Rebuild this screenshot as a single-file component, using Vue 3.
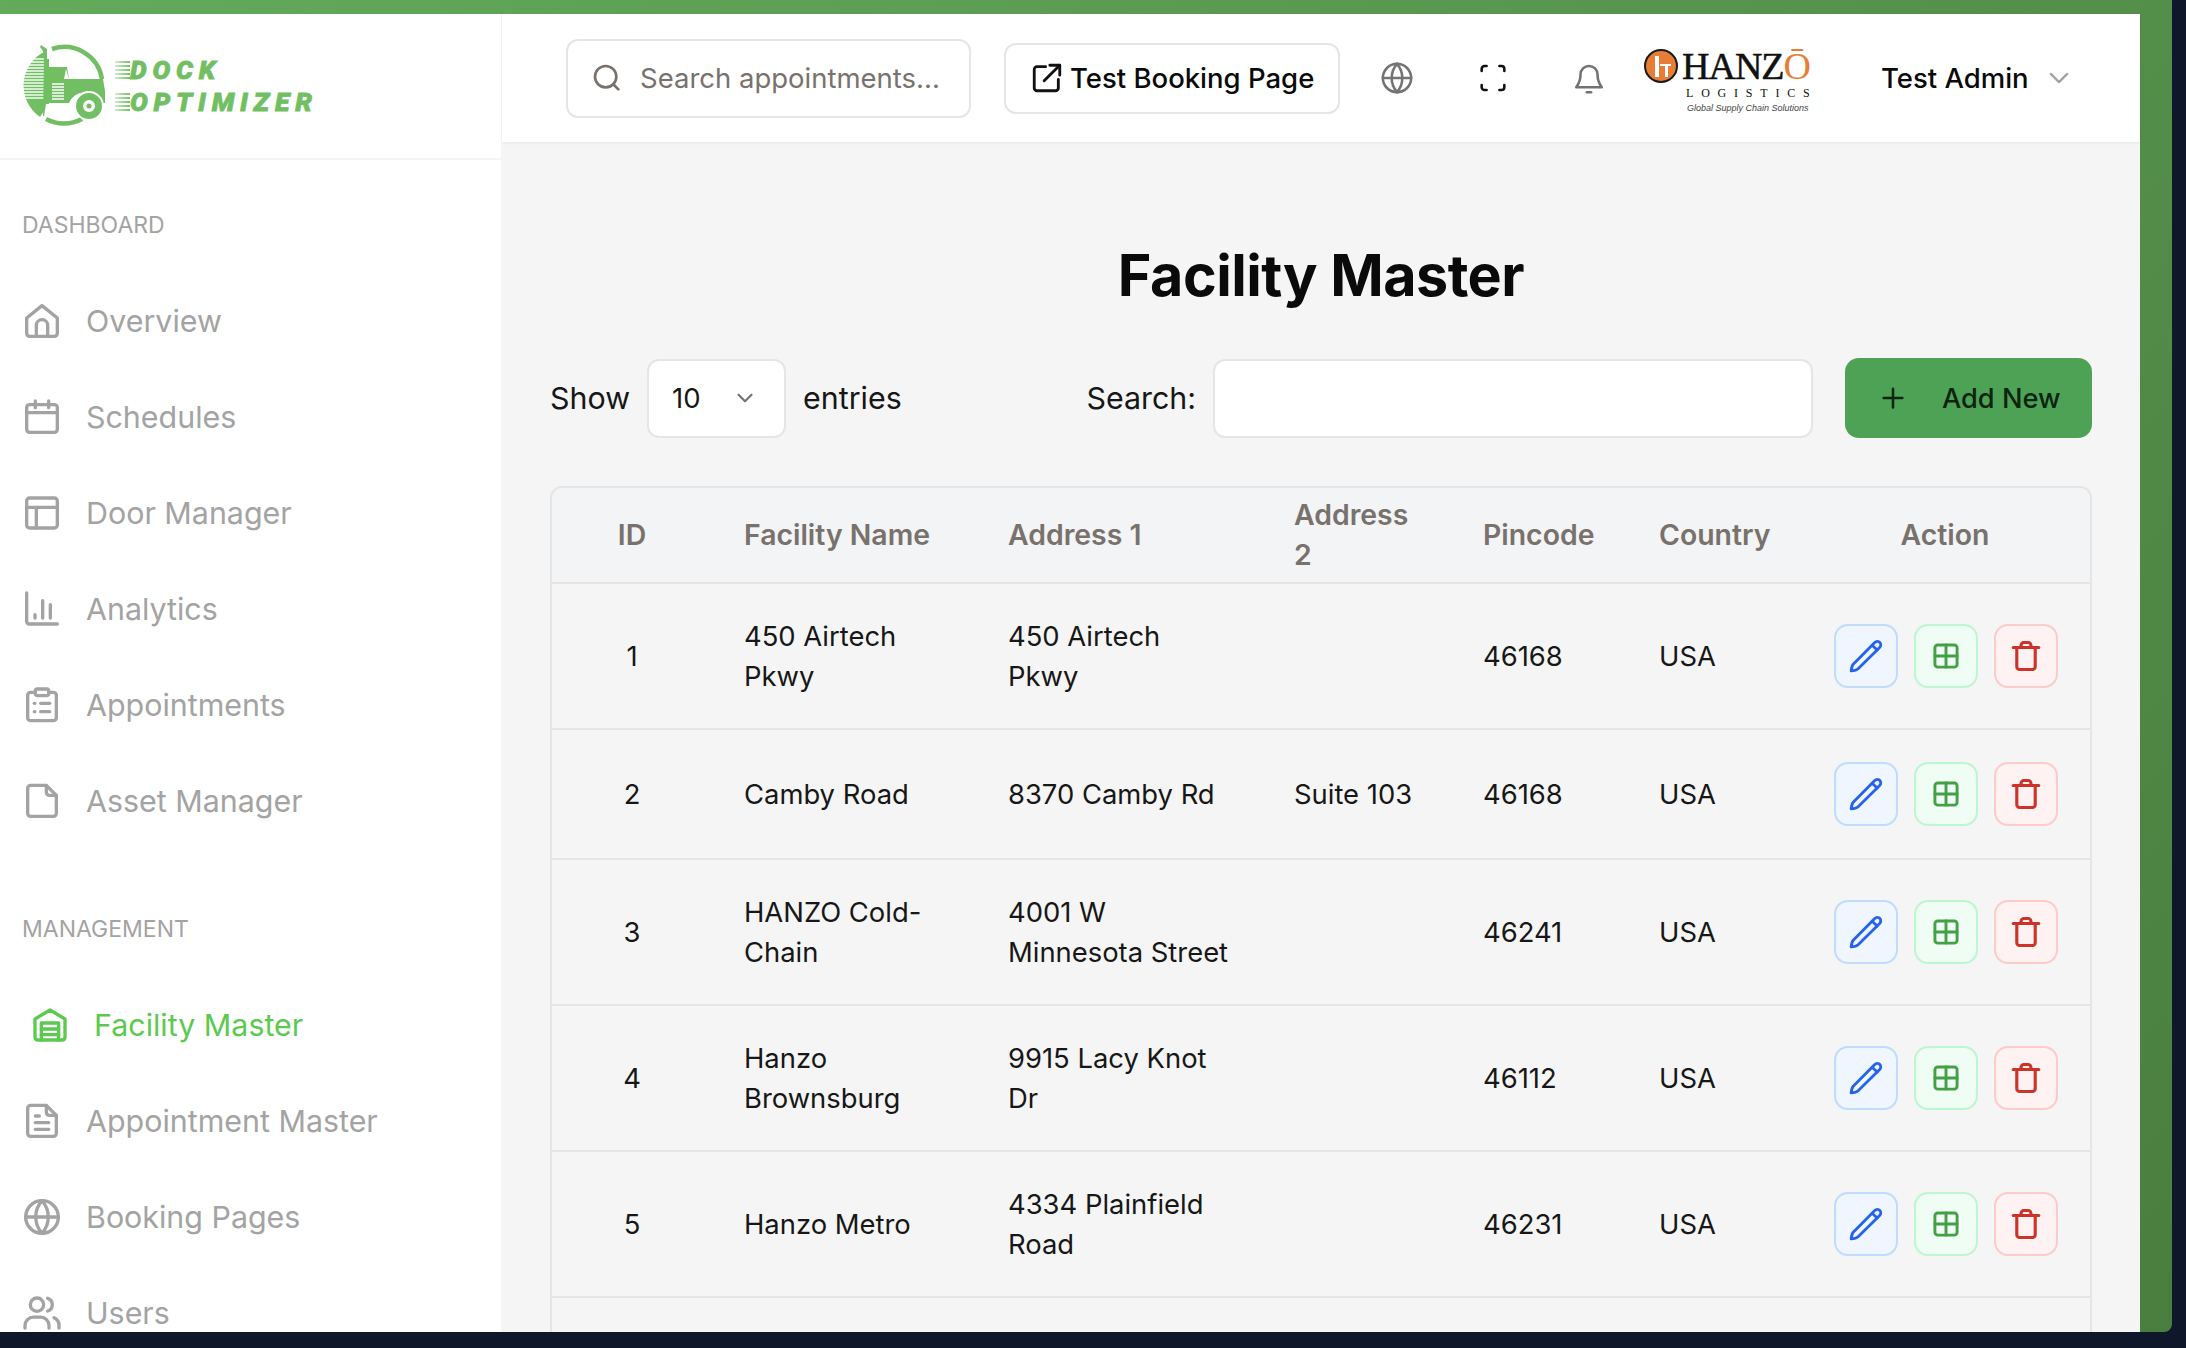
<script setup>
const dashboardItems = [
  { label: 'Overview', paths: ['M2.8 10.2 12 2.8l9.2 7.4v9.2a1.8 1.8 0 0 1-1.8 1.8H4.6a1.8 1.8 0 0 1-1.8-1.8z', 'M8.6 21v-6.4a3.4 3.4 0 0 1 6.8 0V21'] },
  { label: 'Schedules', paths: ['M4.6 4.6h14.8a1.8 1.8 0 0 1 1.8 1.8v13a1.8 1.8 0 0 1-1.8 1.8H4.6a1.8 1.8 0 0 1-1.8-1.8v-13a1.8 1.8 0 0 1 1.8-1.8z', 'M2.8 9.4h18.4', 'M8 2.4v4', 'M16 2.4v4'] },
  { label: 'Door Manager', paths: ['M4.6 3h14.8a1.8 1.8 0 0 1 1.8 1.8v14.4a1.8 1.8 0 0 1-1.8 1.8H4.6a1.8 1.8 0 0 1-1.8-1.8V4.8A1.8 1.8 0 0 1 4.6 3z', 'M2.8 8.6h18.4', 'M8.6 8.6V21'] },
  { label: 'Analytics', paths: ['M2.8 2.4v17a1.6 1.6 0 0 0 1.6 1.6h16.8', 'M7.8 17.4v-2', 'M12.4 17.4V7', 'M17 17.4V9.4'] },
  { label: 'Appointments', paths: ['M8 4.4H5.2a1.8 1.8 0 0 0-1.8 1.8v13.4a1.8 1.8 0 0 0 1.8 1.8h13.6a1.8 1.8 0 0 0 1.8-1.8V6.2a1.8 1.8 0 0 0-1.8-1.8H16', 'M9.2 2.4h5.6A1.2 1.2 0 0 1 16 3.6v1.6a1.2 1.2 0 0 1-1.2 1.2H9.2A1.2 1.2 0 0 1 8 5.2V3.6a1.2 1.2 0 0 1 1.2-1.2z', 'M7.4 11h.3', 'M11.2 11h5.4', 'M7.4 16h.3', 'M11.2 16h5.4'] },
  { label: 'Asset Manager', paths: ['M5.2 2.6h9.4l6 6v10.8a1.8 1.8 0 0 1-1.8 1.8H5.2a1.8 1.8 0 0 1-1.8-1.8V4.4a1.8 1.8 0 0 1 1.8-1.8z', 'M14.6 2.6v4.2a1.8 1.8 0 0 0 1.8 1.8h4.2'] },
]

const managementItems = [
  { label: 'Appointment Master', paths: ['M5.2 2.6h9.4l6 6v10.8a1.8 1.8 0 0 1-1.8 1.8H5.2a1.8 1.8 0 0 1-1.8-1.8V4.4a1.8 1.8 0 0 1 1.8-1.8z', 'M14.6 2.6v4.2a1.8 1.8 0 0 0 1.8 1.8h4.2', 'M8 9h2.4', 'M8 13h8', 'M8 17h8'] },
  { label: 'Booking Pages', paths: ['M12 2.2a9.8 9.8 0 1 0 0 19.6 9.8 9.8 0 0 0 0-19.6z', 'M2.2 12h19.6', 'M12 2.2c-5 5.6-5 14 0 19.6', 'M12 2.2c5 5.6 5 14 0 19.6'] },
  { label: 'Users', paths: ['M9 3a4 4 0 1 0 0 8 4 4 0 0 0 0-8z', 'M1.8 21v-1.5a5 5 0 0 1 5-5h4.4a5 5 0 0 1 5 5V21', 'M15.4 3.2a4 4 0 0 1 0 7.6', 'M19.2 14.8a5 5 0 0 1 3 4.7V21'] },
]

const facilities = [
  { id: 1, name: '450 Airtech Pkwy', address1: '450 Airtech Pkwy', address2: '', pincode: '46168', country: 'USA' },
  { id: 2, name: 'Camby Road', address1: '8370 Camby Rd', address2: 'Suite 103', pincode: '46168', country: 'USA' },
  { id: 3, name: 'HANZO Cold-Chain', address1: '4001 W Minnesota Street', address2: '', pincode: '46241', country: 'USA' },
  { id: 4, name: 'Hanzo Brownsburg', address1: '9915 Lacy Knot Dr', address2: '', pincode: '46112', country: 'USA' },
  { id: 5, name: 'Hanzo Metro', address1: '4334 Plainfield Road', address2: '', pincode: '46231', country: 'USA' },
]

// stripes over the left half of the truck badge
const truckStripes = Array.from({ length: 14 }, (_, i) => 60 + i * 3)
const cabStripes = Array.from({ length: 6 }, (_, i) => 85 + i * 3)
</script>

<template>
  <div class="frame">
    <aside class="sidebar">
      <div class="brand">
        <svg class="truck" viewBox="20 44 90 86" width="90" height="86">
          <path d="M52 50a38 38 0 0 1 50 30" fill="none" stroke="#72bf63" stroke-width="4.5" />
          <path d="M82 120a38 38 0 0 1-36 0" fill="none" stroke="#72bf63" stroke-width="4.5" />
          <path d="M44 53a38 38 0 0 0-4 65l4-6z" fill="#72bf63" />
          <path v-for="y in truckStripes" :key="y" :d="`M22 ${y}h22`" stroke="#fff" stroke-width="1.4" />
          <path d="M44 60h3V50l-6-4-1 2 3 4zM44 60h5v45h-3l-2 12h-1z" fill="#72bf63" />
          <path d="M49 68h18l2 12h34l2 12v12h-6a16 16 0 0 0-30 0H49z" fill="#72bf63" />
          <path v-for="y in cabStripes" :key="y" :d="`M52 ${y}h12`" stroke="#fff" stroke-width="1.5" />
          <path d="M66 70l3 10h-5z" fill="#fff" />
          <circle cx="89" cy="107" r="14" fill="#72bf63" stroke="#fff" stroke-width="2" />
          <circle cx="89" cy="107" r="6" fill="#fff" />
          <circle cx="89" cy="107" r="2.5" fill="#72bf63" />
        </svg>
        <div class="brand-name">
          <span>DOCK</span>
          <span>OPTIMIZER</span>
        </div>
      </div>

      <nav class="nav">
        <div class="nav-title">DASHBOARD</div>
        <a v-for="item in dashboardItems" :key="item.label" class="nav-item">
          <svg class="nav-icon" viewBox="0 0 24 24">
            <path v-for="d in item.paths" :key="d" :d="d" />
          </svg>
          {{ item.label }}
        </a>

        <div class="nav-title second">MANAGEMENT</div>
        <a class="nav-item active">
          <svg class="nav-icon" viewBox="0 0 24 24">
            <path d="M3 8.4 12 3l9 5.4v11a1.6 1.6 0 0 1-1.6 1.6H4.6A1.6 1.6 0 0 1 3 19.4z" />
            <path d="M6.8 21V10.8h10.4V21" />
            <path d="M6.8 14.4h10.4" />
            <path d="M6.8 17.8h10.4" />
          </svg>
          Facility Master
        </a>
        <a v-for="item in managementItems" :key="item.label" class="nav-item">
          <svg class="nav-icon" viewBox="0 0 24 24">
            <path v-for="d in item.paths" :key="d" :d="d" />
          </svg>
          {{ item.label }}
        </a>
      </nav>
    </aside>

    <div class="content">
      <header class="topbar">
        <label class="top-search">
          <svg class="search-icon" viewBox="0 0 24 24">
            <circle cx="11" cy="11" r="8" />
            <path d="m20.5 20.5-3.8-3.8" />
          </svg>
          <span>Search appointments...</span>
        </label>

        <button class="test-link">
          <svg viewBox="0 0 24 24" width="34" height="34">
            <path d="M11 4H5a2 2 0 0 0-2 2v13a2 2 0 0 0 2 2h13a2 2 0 0 0 2-2v-6" />
            <path d="M10 14 21 3" />
            <path d="M14 3h7v7" />
          </svg>
          Test Booking Page
        </button>

        <div class="top-icons">
          <span class="top-icon">
            <svg class="grey" viewBox="0 0 24 24" width="34" height="34">
              <circle cx="12" cy="12" r="10" />
              <path d="M2 12h20" />
              <path d="M12 2c-5 5.8-5 14.2 0 20" />
              <path d="M12 2c5 5.8 5 14.2 0 20" />
            </svg>
          </span>
          <span class="top-icon">
            <svg viewBox="0 0 24 24" width="34" height="34">
              <path d="M7.5 3.5H6a2 2 0 0 0-2 2V7" />
              <path d="M16.5 3.5H18a2 2 0 0 1 2 2V7" />
              <path d="M7.5 20.5H6a2 2 0 0 1-2-2V17" />
              <path d="M16.5 20.5H18a2 2 0 0 0 2-2V17" />
            </svg>
          </span>
          <span class="top-icon">
            <svg class="grey" viewBox="0 0 24 24" width="34" height="34">
              <path d="M6 9.5a6 6 0 0 1 12 0c0 5 1.6 7 3 9H3c1.4-2 3-4 3-9z" />
              <path d="M10.5 22h3" />
            </svg>
          </span>
        </div>

        <div class="hanzo">
          <div class="hanzo-mark">
            <span class="hanzo-circle"><i></i><b></b><u></u></span>
            <span class="hanzo-word">HANZ<em>Ō</em></span>
          </div>
          <div class="hanzo-sub">LOGISTICS</div>
          <div class="hanzo-tag">Global Supply Chain Solutions</div>
        </div>

        <div class="user">
          Test Admin
          <svg viewBox="0 0 24 24" width="28" height="28">
            <path d="m5 8.5 7 7 7-7" />
          </svg>
        </div>
      </header>

      <main class="page">
        <h1>Facility Master</h1>

        <div class="filters">
          <div class="length">
            <span>Show</span>
            <div class="select">
              10
              <svg viewBox="0 0 24 24" width="26" height="26">
                <path d="m6 9 6 6 6-6" />
              </svg>
            </div>
            <span>entries</span>
          </div>
          <div class="table-search">
            <span>Search:</span>
            <input type="text" />
          </div>
          <button class="add-btn">
            <svg viewBox="0 0 24 24" width="30" height="30">
              <path d="M12 4.5v15" />
              <path d="M4.5 12h15" />
            </svg>
            Add New
          </button>
        </div>

        <div class="table-wrap">
          <table>
            <colgroup>
              <col style="width: 160px" />
              <col style="width: 264px" />
              <col style="width: 286px" />
              <col style="width: 189px" />
              <col style="width: 176px" />
              <col style="width: 173px" />
              <col />
            </colgroup>
            <thead>
              <tr>
                <th class="center">ID</th>
                <th>Facility Name</th>
                <th>Address 1</th>
                <th>Address 2</th>
                <th>Pincode</th>
                <th>Country</th>
                <th class="center">Action</th>
              </tr>
            </thead>
            <tbody>
              <tr v-for="row in facilities" :key="row.id">
                <td class="center">{{ row.id }}</td>
                <td>{{ row.name }}</td>
                <td>{{ row.address1 }}</td>
                <td>{{ row.address2 }}</td>
                <td>{{ row.pincode }}</td>
                <td>{{ row.country }}</td>
                <td>
                  <div class="actions">
                    <button class="act edit">
                      <svg viewBox="0 0 24 24" width="42" height="42">
                        <path d="M3.5 20.5c.2-1.8.5-3 1.2-3.8L17 4.3a2 2 0 0 1 2.9 0l-.1-.1a2 2 0 0 1 0 2.9L7.5 19.3c-.8.7-2.200 1.100-4 1.200z" />
                        <path d="m15.5 5.8 2.9 2.8" />
                      </svg>
                    </button>
                    <button class="act grid">
                      <svg viewBox="0 0 24 24" width="28" height="28">
                        <path d="M5 2.5h14A2.5 2.5 0 0 1 21.5 5v14a2.5 2.5 0 0 1-2.5 2.5H5A2.5 2.5 0 0 1 2.5 19V5A2.5 2.5 0 0 1 5 2.5z" />
                        <path d="M12 2.5v19" />
                        <path d="M2.5 12h19" />
                      </svg>
                    </button>
                    <button class="act trash">
                      <svg viewBox="0 0 24 24" width="34" height="34">
                        <path d="M3 6h18" />
                        <path d="M5.5 6v13.5a2 2 0 0 0 2 2h9a2 2 0 0 0 2-2V6" />
                        <path d="M8.5 6V4.5a2 2 0 0 1 2-2h3a2 2 0 0 1 2 2V6" />
                      </svg>
                    </button>
                  </div>
                </td>
              </tr>
              <tr class="spacer"><td colspan="7"></td></tr>
            </tbody>
          </table>
        </div>
      </main>
    </div>
  </div>
</template>

<style>
html,
body {
  margin: 0;
  height: 1348px;
  overflow: hidden;
  background: #0f172a;
}
</style>

<style scoped>
.frame {
  box-sizing: border-box;
  display: flex;
  width: 2172px;
  height: 1332px;
  padding: 14px 32px 0 0;
  overflow: hidden;
  border-radius: 0 0 8px 0;
  background: linear-gradient(135deg, #63aa5b 0%, #4a7e3f 100%);
  font-family: Inter, 'Noto Sans', sans-serif;
}

.sidebar {
  flex: 0 0 502px;
  box-sizing: border-box;
  height: 100%;
  overflow: hidden;
  background: #fff;
  border-right: 1px solid #f5f5f5;
}

.brand {
  display: flex;
  align-items: center;
  gap: 20px;
  box-sizing: border-box;
  height: 146px;
  padding-left: 20px;
  border-bottom: 2px solid #f5f5f5;
}

.truck {
  flex: none;
}

.brand-name {
  display: flex;
  flex-direction: column;
  align-items: flex-start;
  color: #72bf63;
  font-family: Roboto, 'Liberation Sans', sans-serif;
  font-size: 26.5px;
  font-style: italic;
  font-weight: 900;
  line-height: 32px;
  letter-spacing: 5.8px;
  -webkit-text-stroke: 0.8px #72bf63;
}

.brand-name span {
  position: relative;
}

.brand-name span::before {
  content: '';
  position: absolute;
  left: -15px;
  top: 7px;
  width: 15px;
  height: 19px;
  background: repeating-linear-gradient(180deg, #72bf63 0 2px, transparent 2px 4px);
  -webkit-mask-image: linear-gradient(90deg, rgba(0, 0, 0, 0.3), #000);
  mask-image: linear-gradient(90deg, rgba(0, 0, 0, 0.3), #000);
}

.nav {
  padding-top: 49px;
}

.nav-title {
  height: 32px;
  padding-left: 22px;
  margin-bottom: 32px;
  color: #a3a3a3;
  font-size: 23px;
  line-height: 32px;
}

.nav-title.second {
  margin-top: 64px;
}

.nav-item {
  display: flex;
  align-items: center;
  gap: 24px;
  height: 96px;
  padding-left: 22px;
  color: #a3a3a3;
  font-size: 30.4px;
}

.nav-icon {
  flex: none;
  width: 40px;
  height: 40px;
  fill: none;
  stroke: #a3a3a3;
  stroke-width: 2;
  stroke-linecap: round;
  stroke-linejoin: round;
}

.nav-item.active {
  padding-left: 30px;
  color: #5cc94f;
}

.nav-item.active .nav-icon {
  stroke: #5cc94f;
}

.content {
  flex: 1;
  display: flex;
  flex-direction: column;
  min-width: 0;
  background: #f5f5f5;
}

.topbar {
  flex: 0 0 128px;
  display: flex;
  align-items: center;
  padding-left: 64px;
  background: #fff;
  box-shadow: 0 1px 3px rgba(0, 0, 0, 0.06);
}

.topbar svg {
  flex: none;
  fill: none;
  stroke: #111;
  stroke-width: 2;
  stroke-linecap: round;
  stroke-linejoin: round;
}

.top-search {
  box-sizing: border-box;
  display: flex;
  align-items: center;
  gap: 17px;
  width: 405px;
  height: 79px;
  padding-left: 23px;
  border: 2px solid #e5e5e5;
  border-radius: 12px;
  color: #78716c;
  font-size: 27.5px;
}

.search-icon {
  width: 32px;
  height: 32px;
  stroke: #78716c !important;
}

.test-link {
  box-sizing: border-box;
  display: flex;
  align-items: center;
  gap: 6px;
  width: 336px;
  height: 71px;
  margin-left: 33px;
  padding: 0 0 0 24px;
  border: 2px solid #e5e5e5;
  border-radius: 12px;
  background: #fff;
  color: #0a0a0a;
  font-family: inherit;
  font-size: 27.5px;
  font-weight: 500;
}

.top-icons {
  display: flex;
  margin-left: 9px;
}

.top-icon {
  display: flex;
  align-items: center;
  justify-content: center;
  width: 96px;
  height: 64px;
}

.top-icon svg {
  stroke-width: 1.8;
}

.top-icon svg.grey {
  stroke: #737373;
}

.hanzo {
  flex: none;
  display: flex;
  flex-direction: column;
  width: 172px;
  margin-left: 7px;
  margin-top: 4px;
  color: #111;
}

.hanzo-mark {
  display: flex;
  align-items: center;
  gap: 4px;
  height: 38px;
}

.hanzo-circle {
  position: relative;
  flex: none;
  box-sizing: border-box;
  width: 34px;
  height: 34px;
  border: 2px solid #1a1a1a;
  border-radius: 50%;
  background: #e67e35;
}

.hanzo-circle i,
.hanzo-circle b,
.hanzo-circle u {
  position: absolute;
  background: #fff;
}

.hanzo-circle i {
  left: 9px;
  top: 5px;
  width: 4px;
  height: 21px;
}

.hanzo-circle b {
  left: 14px;
  top: 13px;
  width: 11px;
  height: 2px;
}

.hanzo-circle u {
  left: 19px;
  top: 15px;
  width: 3px;
  height: 11px;
}

.hanzo-word {
  font-family: 'Liberation Serif', serif;
  font-size: 38px;
  line-height: 38px;
  letter-spacing: -1px;
  white-space: nowrap;
  -webkit-text-stroke: 0.5px #111;
}

.hanzo-word em {
  color: #e67e35;
  font-style: normal;
  -webkit-text-stroke: 0;
}

.hanzo-sub {
  margin-top: 1px;
  padding-left: 42px;
  font-family: 'Liberation Serif', serif;
  font-size: 12px;
  line-height: 14px;
  letter-spacing: 7.8px;
  white-space: nowrap;
}

.hanzo-tag {
  margin-top: 2px;
  padding-left: 43px;
  color: #444;
  font-family: 'Liberation Sans', sans-serif;
  font-size: 9px;
  font-style: italic;
  line-height: 12px;
  white-space: nowrap;
}

.user {
  display: flex;
  align-items: center;
  gap: 16px;
  margin-left: 65px;
  color: #0a0a0a;
  font-size: 27.5px;
  font-weight: 500;
  white-space: nowrap;
}

.topbar .user svg {
  stroke: #a3a3a3;
}

.page {
  flex: 1;
  display: flex;
  flex-direction: column;
  min-height: 0;
  padding: 0 48px;
  overflow: hidden;
}

h1 {
  margin: 96px 0 0;
  color: #0a0a0a;
  font-size: 57.4px;
  font-weight: 700;
  line-height: 74px;
  text-align: center;
  letter-spacing: -0.5px;
}

.filters {
  display: flex;
  align-items: center;
  height: 80px;
  margin-top: 46px;
  color: #171717;
  font-size: 30.4px;
}

.length {
  display: flex;
  align-items: center;
  gap: 17px;
}

.select {
  box-sizing: border-box;
  display: flex;
  align-items: center;
  justify-content: space-between;
  width: 139px;
  height: 79px;
  padding: 0 26px 0 23px;
  border: 2px solid #e5e5e5;
  border-radius: 12px;
  background: #fff;
  font-size: 27.5px;
}

.select svg {
  fill: none;
  stroke: #737373;
  stroke-width: 2;
  stroke-linecap: round;
  stroke-linejoin: round;
}

.table-search {
  display: flex;
  align-items: center;
  gap: 17px;
  margin-left: auto;
}

.table-search input {
  box-sizing: border-box;
  width: 600px;
  height: 79px;
  border: 2px solid #e5e5e5;
  border-radius: 12px;
  background: #fff;
}

.add-btn {
  box-sizing: border-box;
  display: flex;
  align-items: center;
  gap: 34px;
  width: 247px;
  height: 80px;
  margin-left: 32px;
  padding: 0 0 0 33px;
  border: 0;
  border-radius: 14px;
  background: #4da255;
  color: #0d2410;
  font-family: inherit;
  font-size: 27.2px;
  font-weight: 500;
}

.add-btn svg {
  fill: none;
  stroke: #0d2410;
  stroke-width: 2;
  stroke-linecap: round;
}

.table-wrap {
  flex: 1;
  margin-top: 48px;
  overflow: hidden;
  border: 2px solid #e5e5e5;
  border-bottom: 0;
  border-radius: 12px 12px 0 0;
}

table {
  width: 100%;
  table-layout: fixed;
  border-collapse: collapse;
  color: #171717;
  font-size: 27.4px;
  line-height: 40px;
}

th {
  padding: 7px 32px;
  box-sizing: border-box;
  background: #f3f4f6;
  color: #78716c;
  font-size: 28.4px;
  font-weight: 600;
  text-align: left;
  border-bottom: 2px solid #e7e5e4;
}

td {
  padding: 32px;
  border-bottom: 2px solid #e5e5e5;
}

.center {
  padding-left: 0;
  padding-right: 0;
  text-align: center;
}

.actions {
  display: flex;
  justify-content: center;
  gap: 16px;
  margin: 0 -32px 0 -30px;
}

.act {
  box-sizing: border-box;
  display: flex;
  align-items: center;
  justify-content: center;
  width: 64px;
  height: 64px;
  padding: 0;
  border: 2px solid;
  border-radius: 14px;
}

.act svg {
  fill: none;
  stroke: currentColor;
  stroke-width: 2.2;
  stroke-linecap: round;
  stroke-linejoin: round;
}

.edit svg {
  stroke-width: 1.6;
}

.grid svg {
  stroke-width: 2.5;
}

.edit {
  background: #eff6ff;
  border-color: #bfdbfe;
  color: #2563eb;
}

.grid {
  background: #f0fdf4;
  border-color: #bbf7d0;
  color: #43a047;
}

.trash {
  background: #fef2f2;
  border-color: #fecaca;
  color: #cc3329;
}

.spacer td {
  height: 60px;
  padding: 0;
  border: 0;
}
</style>
